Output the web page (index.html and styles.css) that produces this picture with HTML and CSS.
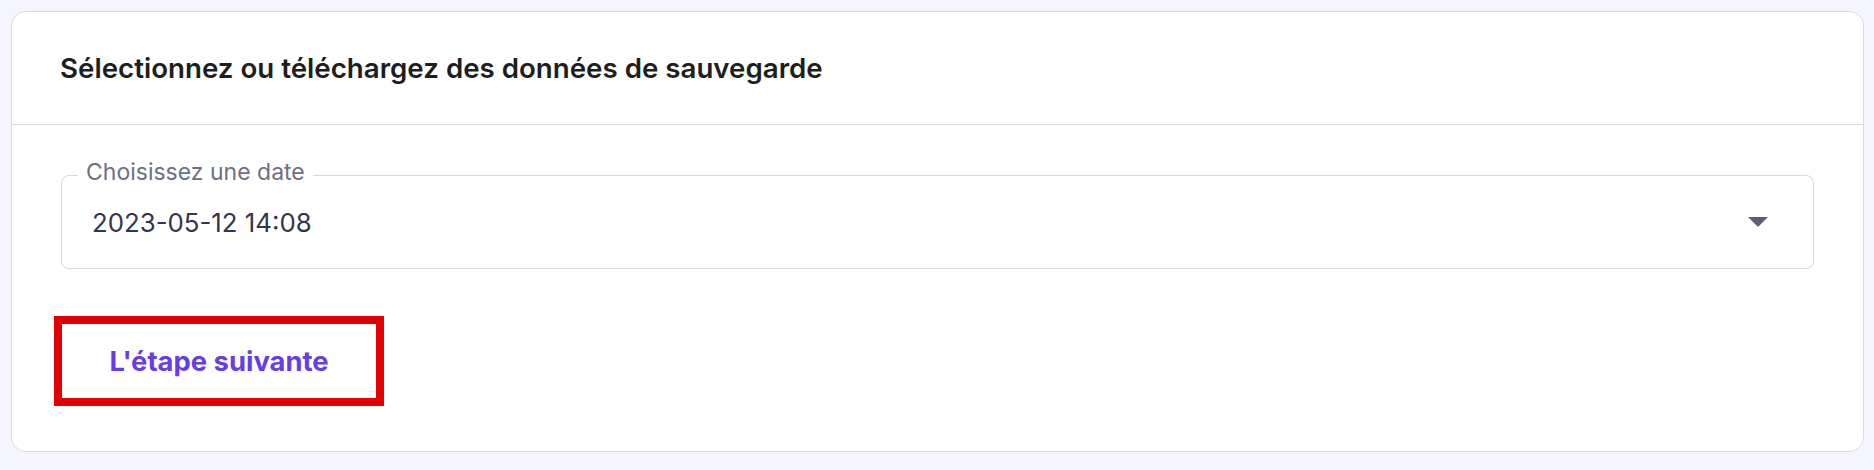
FILE: index.html
```html
<!DOCTYPE html>
<html lang="fr">
<head>
<meta charset="utf-8">
<title>Sauvegarde</title>
<link rel="stylesheet" href="styles.css">
</head>
<body>
<section class="card">
  <header class="card-header">
    <h2 class="card-title">Sélectionnez ou téléchargez des données de sauvegarde</h2>
  </header>
  <div class="card-body">
    <div class="select">
      <span class="select-label">Choisissez une date</span>
      <span class="select-value">2023-05-12 14:08</span>
      <span class="select-arrow"></span>
    </div>
    <div class="actions">
      <button class="btn-next" type="button">L'étape suivante</button>
    </div>
  </div>
</section>
</body>
</html>
```
FILE: styles.css
```css
html, body {
  margin: 0;
  padding: 0;
}
body {
  background: #f4f5ff;
  padding: 11px 10px 19px 11px;
  font-family: "Inter", "DejaVu Sans", sans-serif;
}
.card {
  background: #ffffff;
  border: 1px solid #d9dae0;
  border-radius: 15px;
  box-sizing: border-box;
  height: 441px;
}
.card-header {
  height: 112px;
  display: flex;
  align-items: center;
  padding: 0 48px;
  border-bottom: 1px solid #d9dae0;
}
.card-title {
  margin: 0;
  font-size: 27.7px;
  font-weight: 600;
  color: #1d1e20;
}
.card-body {
  padding: 50px 49px 0 49px;
}
.select {
  position: relative;
  height: 94px;
  box-sizing: border-box;
  border: 1px solid #d6d7de;
  border-radius: 8px;
  display: flex;
  align-items: center;
  justify-content: space-between;
  padding: 0 45px 0 30px;
}
.select-label {
  position: absolute;
  top: -18px;
  left: 16px;
  padding: 0 8px;
  background: #ffffff;
  font-size: 23px;
  line-height: 28px;
  color: #6d7081;
}
.select-value {
  font-size: 25.8px;
  color: #36344d;
}
.select-arrow {
  width: 0;
  height: 0;
  border-left: 10px solid transparent;
  border-right: 10px solid transparent;
  border-top: 10px solid #5f5d78;
}
.actions {
  padding-top: 55px;
  display: flex;
}
.btn-next {
  width: 314px;
  height: 74px;
  margin-left: 1px;
  background: #ffffff;
  border: none;
  outline: 8px solid #e30000;
  font-family: "Inter", "DejaVu Sans", sans-serif;
  font-size: 27.4px;
  font-weight: 700;
  color: #673de6;
  cursor: pointer;
}
```
